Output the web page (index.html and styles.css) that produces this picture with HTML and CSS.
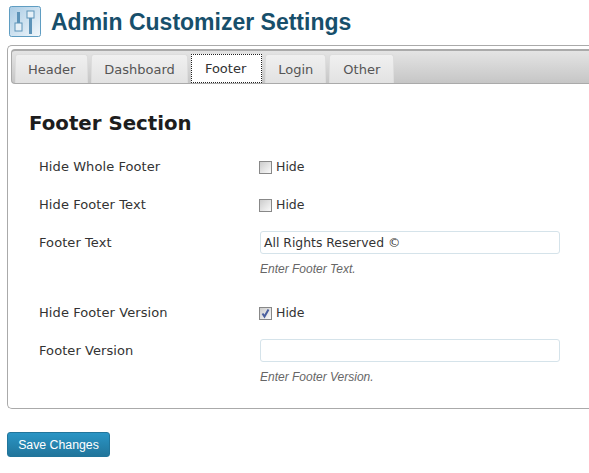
FILE: index.html
```html
<!DOCTYPE html>
<html>
	<head>
		<meta charset="UTF-8">
		<title>Admin Customizer Settings</title>
		<link rel="stylesheet" href="styles.css">
	</head>
	<body>
		<div class="head">
			<svg class="logo" width="33" height="33" viewBox="0 0 33 33">
				<defs>
					<linearGradient id="logobg" x1="0" y1="0" x2="1" y2="1">
						<stop offset="0" stop-color="#a9cbe4"/>
						<stop offset="1" stop-color="#f2f7fb"/>
					</linearGradient>
				</defs>
				<rect x="0.5" y="0.5" width="31" height="30" rx="2" fill="url(#logobg)" stroke="#5f9dc2"/>
				<rect x="8" y="6" width="3" height="18" fill="#5d93b8"/>
				<rect x="6" y="17" width="7" height="8" fill="#e6f0f7" stroke="#5d93b8"/>
				<rect x="20" y="9" width="3" height="19" fill="#5d93b8"/>
				<rect x="18" y="5" width="7" height="7" fill="#e6f0f7" stroke="#5d93b8"/>
			</svg>
			<h1 class="title">Admin Customizer Settings</h1>
		</div>
		<div class="panel">
			<ul class="tabs">
				<li class="tab">Header</li>
				<li class="tab">Dashboard</li>
				<li class="tab active">Footer</li>
				<li class="tab">Login</li>
				<li class="tab">Other</li>
			</ul>
			<div class="content">
				<h2 class="section">Footer Section</h2>
				<div class="row">
					<div class="label">Hide Whole Footer</div>
					<label class="check"><span class="box"></span>Hide</label>
				</div>
				<div class="row">
					<div class="label">Hide Footer Text</div>
					<label class="check"><span class="box"></span>Hide</label>
				</div>
				<div class="row">
					<div class="label">Footer Text</div>
					<div class="field">
						<div class="input">All Rights Reserved ©</div>
						<p class="hint">Enter Footer Text.</p>
					</div>
				</div>
				<div class="row">
					<div class="label">Hide Footer Version</div>
					<label class="check">
						<span class="box">
							<svg width="11" height="11" viewBox="0 0 11 11"><path d="M2.5 5.5 L4.5 8.5 L8.5 1.5" fill="none" stroke="#4a5f9e" stroke-width="2"/></svg>
						</span>Hide
					</label>
				</div>
				<div class="row">
					<div class="label">Footer Version</div>
					<div class="field">
						<div class="input"></div>
						<p class="hint">Enter Footer Version.</p>
					</div>
				</div>
			</div>
		</div>
		<button class="save">Save Changes</button>
	</body>
</html>
```

FILE: styles.css
```css
* {
	margin:0;
	padding:0;
	box-sizing:border-box;
}
body {
	height:473px;
	overflow:hidden;
	background:#fff;
	padding:6px 0 0 7px;
	font-family:"DejaVu Sans", Verdana, sans-serif;
	font-size:13px;
	color:#333;
}
li {
	list-style:none;
}
.head {
	display:flex;
	align-items:center;
	gap:9px;
	height:33px;
	padding-left:2px;
}
.logo {
	flex:none;
}
.title {
	font-family:"Liberation Sans", Arial, sans-serif;
	font-size:23px;
	font-weight:bold;
	color:#174f6b;
}
.panel {
	height:364px;
	margin-top:6px;
	padding:3px 0 3px 3px;
	border:1px solid #aaa;
	border-right:none;
	border-radius:5px 0 0 5px;
}
.tabs {
	display:flex;
	gap:3px;
	height:35px;
	padding:3px 0 0 3px;
	border:1px solid #aaa;
	border-top-width:2px;
	border-right:none;
	border-radius:4px 0 0 4px;
	background:linear-gradient(#e4e4e4, #c6c6c6);
}
.tab {
	height:29px;
	padding:0 13px;
	line-height:29px;
	color:#555;
	background:linear-gradient(#f0f0f0, #e2e2e2);
	border:1px solid #ddd;
	border-width:1px 1px 0;
	border-radius:3px 3px 0 0;
}
.tab:nth-child(1), .tab:nth-child(2), .tab:nth-child(4) {
	padding:0 12px;
}
.tab.active {
	padding:0 15px 0 13px;
	color:#333;
	background:#fff;
	border:1px dotted #222;
	border-radius:0;
	line-height:27px;
}
.content {
	padding:28px 0 0 18px;
}
.section {
	font-size:19.8px;
	font-weight:bold;
	line-height:24px;
	color:#1d1d1d;
	margin-bottom:20px;
}
.row {
	display:flex;
	margin-bottom:16px;
	min-height:22px;
	line-height:22px;
}
.label {
	flex:none;
	width:231px;
	padding-left:10px;
	letter-spacing:0.08px;
}
.check {
	display:flex;
	align-items:center;
	height:22px;
	margin-left:-1px;
	font-size:12.5px;
}
.box {
	display:flex;
	align-items:center;
	justify-content:center;
	width:13px;
	height:13px;
	margin-right:4px;
	border:1px solid #888;
	background:linear-gradient(135deg, #ccc, #fafafa);
}
.input {
	width:300px;
	height:23px;
	margin-top:-1px;
	padding-left:3px;
	font-size:12.4px;
	line-height:21px;
	border:1px solid #d5e3ea;
	border-radius:3px;
}
.hint {
	margin-top:7px;
	margin-bottom:9px;
	font-family:"Liberation Sans", Arial, sans-serif;
	font-style:italic;
	font-size:12px;
	line-height:16px;
	color:#666;
}
.save {
	display:block;
	width:103px;
	height:25px;
	margin-top:23px;
	font-family:"Liberation Sans", Arial, sans-serif;
	font-size:12.3px;
	color:#fff;
	background:linear-gradient(#2a95c5, #21759b);
	border:1px solid #21759b;
	border-radius:3px;
}
```
